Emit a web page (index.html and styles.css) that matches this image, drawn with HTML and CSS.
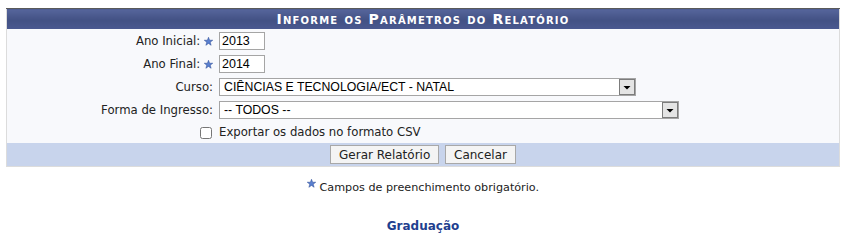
FILE: index.html
```html
<!DOCTYPE html>
<html lang="pt-BR">
<head>
    <meta charset="UTF-8">
    <title>Relatório</title>
    <link rel="stylesheet" href="styles.css">
</head>
<body>
    <table class="formulario">
        <thead>
            <tr><th colspan="2">Informe os Parâmetros do Relatório</th></tr>
        </thead>
        <tbody>
            <tr>
                <td class="label">Ano Inicial: <span class="obrig"></span></td>
                <td><input type="text" class="ano" value="2013"></td>
            </tr>
            <tr>
                <td class="label">Ano Final: <span class="obrig"></span></td>
                <td><input type="text" class="ano" value="2014"></td>
            </tr>
            <tr>
                <td class="label">Curso:</td>
                <td>
                    <span class="combo curso">
                        <select><option>CIÊNCIAS E TECNOLOGIA/ECT - NATAL</option></select>
                    </span>
                </td>
            </tr>
            <tr>
                <td class="label">Forma de Ingresso:</td>
                <td>
                    <span class="combo ingresso">
                        <select><option>-- TODOS --</option></select>
                    </span>
                </td>
            </tr>
            <tr class="ultima">
                <td class="label"><input type="checkbox" id="csv" class="check"></td>
                <td><label for="csv">Exportar os dados no formato CSV</label></td>
            </tr>
        </tbody>
        <tfoot>
            <tr>
                <td colspan="2">
                    <button type="button">Gerar Relatório</button>
                    <button type="button">Cancelar</button>
                </td>
            </tr>
        </tfoot>
    </table>

    <p class="legenda"><span class="obrig alto"></span> Campos de preenchimento obrigatório.</p>

    <p class="modulo">Graduação</p>
</body>
</html>
```

FILE: styles.css
```css
body {
    margin: 0;
    padding: 8px 6px 0;
    font-family: "DejaVu Sans", Verdana, sans-serif;
    font-size: 11.7px;
    color: #222;
}
.formulario {
    width: 834px;
    border-collapse: collapse;
    background-color: #f8f9fc;
    border: 1px solid #dcdcdc;
}
.formulario th {
    height: 20px;
    padding: 0;
    border-top: 1px solid #5a5a5a;
    background: linear-gradient(#56659b, #425184 55%, #4a5990);
    color: #fff;
    font-variant: small-caps;
    font-size: 14px;
    letter-spacing: 1.2px;
    text-align: center;
}
.formulario td {
    padding: 0 0 0 4px;
    height: 23px;
}
.formulario tr.ultima td {
    height: 22px;
}
.formulario td.label {
    width: 206px;
    padding: 0 2px 0 0;
    text-align: right;
    white-space: nowrap;
}
.obrig {
    display: inline-block;
    width: 9px;
    height: 9px;
    background: url("data:image/svg+xml,%3Csvg xmlns='http://www.w3.org/2000/svg' viewBox='0 0 10 10'%3E%3Cpath d='M5 0.3L6.2 3.6H9.7L6.9 5.7L7.9 9.2L5 7.1L2.1 9.2L3.1 5.7L0.3 3.6H3.8Z' fill='%235a80d0' stroke='%23304f98' stroke-width='0.6'/%3E%3C/svg%3E") no-repeat center / contain;
    vertical-align: -1px;
}
.obrig.alto {
    vertical-align: 3px;
}
input.ano {
    width: 46px;
    height: 18px;
    box-sizing: border-box;
    margin: 0;
    padding: 1px 2px;
    border: 1px solid #a5a5a5;
    font-family: "Liberation Sans", Arial, sans-serif;
    font-size: 12.5px;
    color: #000;
    background: #fff;
    vertical-align: middle;
}
.combo {
    position: relative;
    display: inline-block;
    vertical-align: middle;
}
.combo.curso { width: 417px; }
.combo.ingresso { width: 460px; }
.combo select {
    appearance: none;
    -webkit-appearance: none;
    width: 100%;
    height: 18px;
    box-sizing: border-box;
    margin: 0;
    padding: 0 0 0 4px;
    border: 1px solid #a5a5a5;
    border-radius: 0;
    background: #fff;
    font-family: "Liberation Sans", Arial, sans-serif;
    font-size: 12.3px;
    color: #000;
    display: block;
}
.combo::after {
    content: "";
    position: absolute;
    right: 1px;
    top: 1px;
    width: 14px;
    height: 14px;
    border: 1px solid #7c7c7c;
    background: #e4e4e4 url("data:image/svg+xml,%3Csvg xmlns='http://www.w3.org/2000/svg' viewBox='0 0 14 14'%3E%3Cpath d='M3.5 6H10.5L7 9.5Z' fill='%23000'/%3E%3C/svg%3E") no-repeat center;
}
.check {
    width: 12px;
    height: 12px;
    margin: 0 1px 0 0;
    vertical-align: middle;
}
.formulario tfoot td {
    height: 23px;
    padding: 0;
    background-color: #c8d4ec;
    text-align: center;
}
.formulario button {
    height: 19px;
    margin: 0 1px;
    padding: 0 8px;
    border: 1px solid #a8a8a8;
    background: #f4f4f4;
    font-family: "DejaVu Sans", Verdana, sans-serif;
    font-size: 12px;
    color: #222;
    vertical-align: middle;
}
.legenda {
    margin: 12px 0 0;
    font-size: 11.2px;
    text-align: center;
}
.modulo {
    margin: 25px 0 0;
    text-align: center;
    font-weight: bold;
    font-size: 12px;
    color: #1f3f8f;
}
```
